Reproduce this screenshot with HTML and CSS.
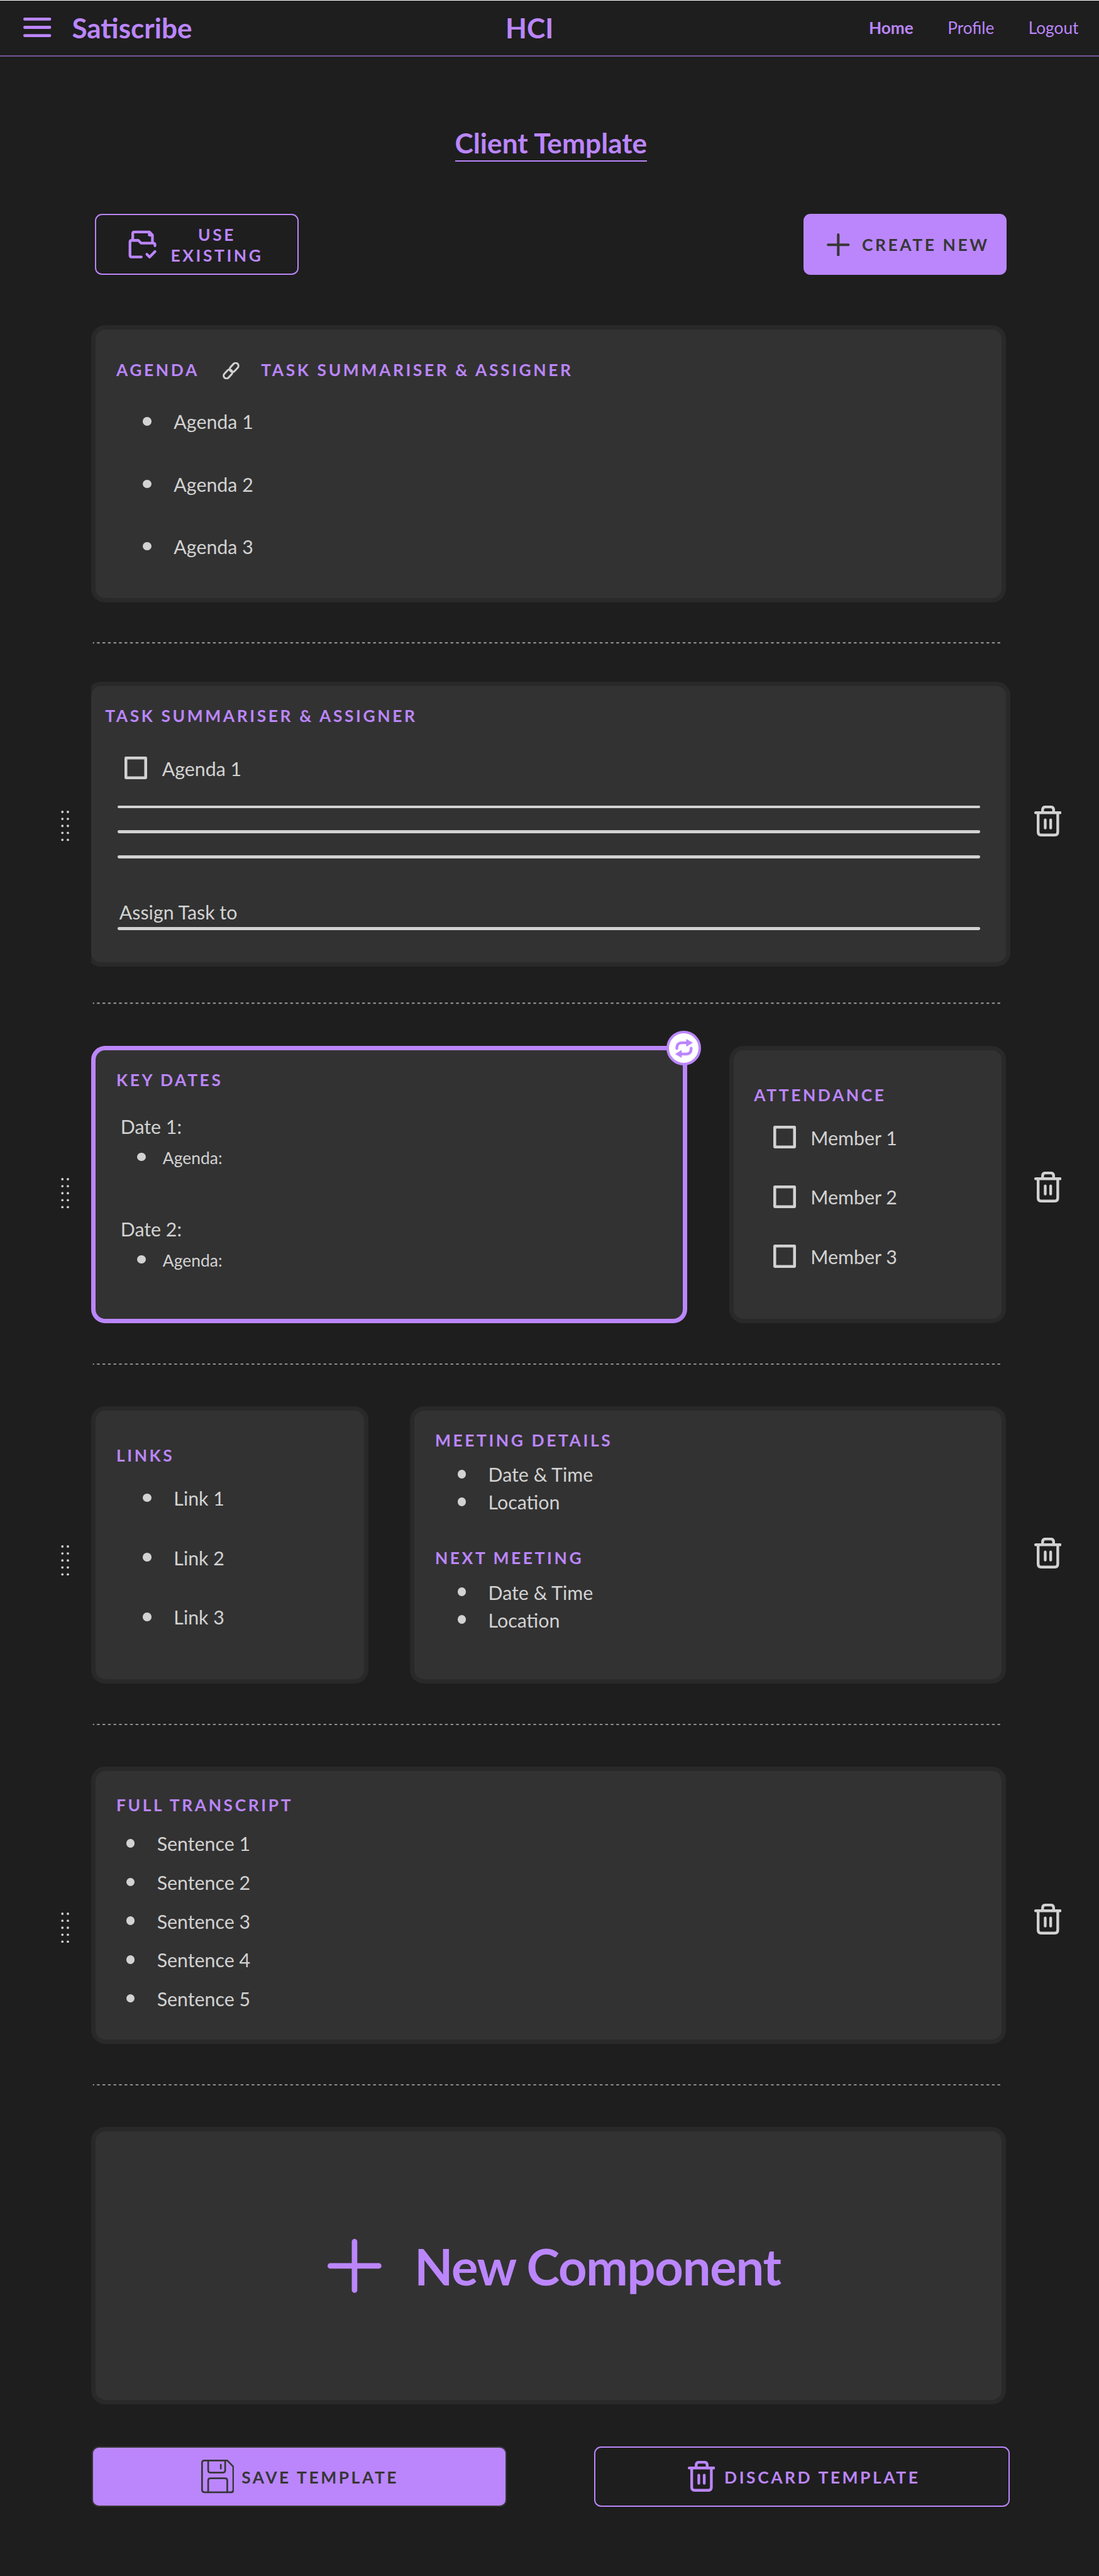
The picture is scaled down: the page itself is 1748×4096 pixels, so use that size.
FILE: index.html
```html
<!DOCTYPE html>
<html lang="en">
<head>
<meta charset="utf-8">
<title>Satiscribe - Client Template</title>
<link rel="stylesheet" href="styles.css">
</head>
<body>
<svg class="defs" width="0" height="0" aria-hidden="true">
  <symbol id="trash" viewBox="0 0 55 62">
    <g fill="none" stroke="currentColor" stroke-width="5.5" stroke-linecap="round" stroke-linejoin="round">
      <path d="M2.7 14.1H52.2M16.7 14V8.5Q16.7 2.7 22.5 2.7H33Q38.8 2.7 38.8 8.5V14M7.8 14V53Q7.8 58.9 13.6 58.9H41.3Q47.1 58.9 47.1 53V14M22 28.5V44.8M32.9 28.5V44.8"/>
    </g>
  </symbol>
  <symbol id="grip" viewBox="0 0 17 61">
    <path fill="none" stroke="currentColor" stroke-width="4.8" stroke-linecap="round" d="M2.8 2.5h.01M2.8 16.5h.01M2.8 30.5h.01M2.8 44.5h.01M2.8 58.5h.01M13.8 2.5h.01M13.8 16.5h.01M13.8 30.5h.01M13.8 44.5h.01M13.8 58.5h.01"/>
  </symbol>
  <symbol id="dashes" viewBox="0 0 1823 3">
    <path d="M0 1.5H1823" stroke="currentColor" stroke-width="3" stroke-dasharray="5.55 5.55" stroke-dashoffset="2.8"/>
  </symbol>
</svg>

<header class="topbar">
  <div class="brand">
    <svg class="menu" viewBox="0 0 56 39"><path d="M3 3H53M3 19.5H53M3 36H53" stroke="currentColor" stroke-width="6" stroke-linecap="round"/></svg>
    <span class="logo">Satiscribe</span>
  </div>
  <span class="logo">HCI</span>
  <nav class="nav">
    <a class="current">Home</a>
    <a>Profile</a>
    <a>Logout</a>
  </nav>
</header>

<main>
  <h1 class="page-title"><span>Client Template</span></h1>

  <div class="actions">
    <button class="btn outline use">
      <svg class="folder" viewBox="0 0 80 80"><g fill="none" stroke="currentColor" stroke-width="5.4" stroke-linecap="round" stroke-linejoin="round"><path d="M20.3 30V18Q20.3 15 23.3 15H54L59.7 21V35"/><path d="M53.5 16V21.3H59"/><path d="M37.5 65H18Q14.8 65 14.8 61.8V35Q14.8 31.8 18 31.8H31.5L37 37.2H61.5Q64.8 37.2 64.8 40.5V42.5"/><path d="M48.5 59.5L54 65L64.8 54"/></g></svg>
      <span>USE<br>EXISTING</span>
    </button>
    <button class="btn filled create">
      <svg class="plus" viewBox="0 0 46 46"><path d="M2.7 23H43.3M23 2.7V43.3" stroke="currentColor" stroke-width="5.2" stroke-linecap="round"/></svg>
      <span>CREATE NEW</span>
    </button>
  </div>

  <div class="board">
    <div class="grips">
      <svg class="grip"><use href="#grip"/></svg>
      <svg class="grip"><use href="#grip"/></svg>
      <svg class="grip"><use href="#grip"/></svg>
      <svg class="grip"><use href="#grip"/></svg>
    </div>

    <div class="stack">
      <section class="card agenda">
        <div class="heading-row">
          <h2>AGENDA</h2>
          <svg class="link" viewBox="0 0 34 34"><g transform="rotate(-47 17 17)" fill="none" stroke="currentColor" stroke-width="3.8"><rect x="-2.1" y="11.3" width="20.4" height="11.4" rx="5.7"/><rect x="15.7" y="11.3" width="20.4" height="11.4" rx="5.7"/></g></svg>
          <h2>TASK SUMMARISER &amp; ASSIGNER</h2>
        </div>
        <ul class="bullets">
          <li>Agenda 1</li>
          <li>Agenda 2</li>
          <li>Agenda 3</li>
        </ul>
      </section>

      <svg class="divider"><use href="#dashes"/></svg>

      <div class="clip">
        <section class="card summary">
          <h2>TASK SUMMARISER &amp; ASSIGNER</h2>
          <label class="check"><i></i>Agenda 1</label>
          <div class="rules"><hr><hr><hr></div>
          <p class="assign">Assign Task to</p>
          <hr>
        </section>
      </div>

      <svg class="divider"><use href="#dashes"/></svg>

      <div class="pair">
        <section class="card dates selected">
          <h2>KEY DATES</h2>
          <p>Date 1:</p>
          <ul class="bullets small"><li>Agenda:</li></ul>
          <p>Date 2:</p>
          <ul class="bullets small"><li>Agenda:</li></ul>
          <span class="swap">
            <svg viewBox="0 0 35 38"><path d="M3.2 19C3 11.5 6.5 7.7 13 7.7H23M31.8 18.5C32 26.5 28.5 30.2 22 30.2H12" fill="none" stroke="currentColor" stroke-width="5.6" stroke-linecap="round"/><path d="M22.5 .8L34.5 7.7L22.5 14.8ZM12.5 22.8L.5 30.2L12.5 37.2Z" fill="currentColor" stroke="currentColor" stroke-width="1" stroke-linejoin="round"/></svg>
          </span>
        </section>
        <section class="card short attendance">
          <h2>ATTENDANCE</h2>
          <div class="checks">
            <label class="check"><i></i>Member 1</label>
            <label class="check"><i></i>Member 2</label>
            <label class="check"><i></i>Member 3</label>
          </div>
        </section>
      </div>

      <svg class="divider"><use href="#dashes"/></svg>

      <div class="pair">
        <section class="card short links">
          <h2>LINKS</h2>
          <ul class="bullets">
            <li>Link 1</li>
            <li>Link 2</li>
            <li>Link 3</li>
          </ul>
        </section>
        <section class="card meeting">
          <h2>MEETING DETAILS</h2>
          <ul class="bullets">
            <li>Date &amp; Time</li>
            <li>Location</li>
          </ul>
          <h2>NEXT MEETING</h2>
          <ul class="bullets">
            <li>Date &amp; Time</li>
            <li>Location</li>
          </ul>
        </section>
      </div>

      <svg class="divider"><use href="#dashes"/></svg>

      <section class="card transcript">
        <h2>FULL TRANSCRIPT</h2>
        <ul class="bullets">
          <li>Sentence 1</li>
          <li>Sentence 2</li>
          <li>Sentence 3</li>
          <li>Sentence 4</li>
          <li>Sentence 5</li>
        </ul>
      </section>

      <svg class="divider"><use href="#dashes"/></svg>

      <section class="card new">
        <svg class="big-plus" viewBox="0 0 108 108"><path d="M5.5 54H102.5M54 5.5V102.5" stroke="currentColor" stroke-width="11" stroke-linecap="round"/></svg>
        <span>New Component</span>
      </section>
    </div>

    <div class="bins">
      <svg class="bin"><use href="#trash"/></svg>
      <svg class="bin"><use href="#trash"/></svg>
      <svg class="bin"><use href="#trash"/></svg>
      <svg class="bin"><use href="#trash"/></svg>
    </div>
  </div>

  <div class="footer">
    <button class="btn filled save">
      <svg class="disk" viewBox="0 0 66 67"><g fill="none" stroke="currentColor" stroke-width="3.4" stroke-linecap="round" stroke-linejoin="round"><path d="M6.5 1.7H52.3L64.3 14V60.5Q64.3 65.3 59.5 65.3H6.5Q1.7 65.3 1.7 60.5V6.5Q1.7 1.7 6.5 1.7Z"/><path d="M14 2V21.5Q14 26 18.5 26H43.5Q48 26 48 21.5V2M39.3 10.3V17.8M14 65V42Q14 37.3 18.5 37.3H47.5Q52.2 37.3 52.2 42V65"/></g></svg>
      <span>SAVE TEMPLATE</span>
    </button>
    <button class="btn outline discard">
      <svg class="bin"><use href="#trash"/></svg>
      <span>DISCARD TEMPLATE</span>
    </button>
  </div>
</main>
</body>
</html>
```

FILE: styles.css
```css
:root {
  --bg: #1e1e1e;
  --card: #323232;
  --card-edge: #292929;
  --accent: #bb86fc;
  --ink: #d2d2d2;
  --dark: #373737;
}

/* 1rem is 1/220 of the window width */
html { font-size: calc(100vw / 220); }

* { box-sizing: border-box; }

body {
  margin: 0;
  background: var(--bg);
  color: var(--ink);
  font-family: Lato, "Liberation Sans", sans-serif;
  font-size: 3.82rem;
  line-height: 4.6rem;
}

h1, h2, p, ul { margin: 0; padding: 0; font-weight: 400; }
svg { display: block; flex: none; }
.defs { position: absolute; }

/* Header */
.topbar {
  display: grid;
  grid-template-columns: 101.2rem auto 1fr;
  align-items: center;
  height: 11.3rem;
  border-top: .2rem solid #fff;
  border-bottom: .26rem solid #75559a;
  color: var(--accent);
}
.brand { display: flex; align-items: center; gap: 4.1rem; padding-left: 4.7rem; }
.menu { width: 5.6rem; height: 3.9rem; margin-bottom: .3rem; }
.logo { font-size: 5.55rem; line-height: 6.6rem; font-weight: 700; }
.nav {
  display: flex;
  justify-content: flex-end;
  gap: 6.85rem;
  padding: .1rem 4.1rem 0 0;
  font-size: 3.3rem;
  line-height: 4rem;
}
.current { font-weight: 700; }

/* Title and top actions */
.page-title {
  display: flex;
  justify-content: center;
  margin: 14.05rem 0 0 .6rem;
  color: var(--accent);
}
.page-title span {
  font-size: 5.57rem;
  line-height: 6.6rem;
  font-weight: 700;
  padding-bottom: .15rem;
  border-bottom: .3rem solid var(--accent);
}

.btn {
  display: flex;
  align-items: center;
  height: 12.2rem;
  padding: 0;
  border-radius: 1.4rem;
  font: 700 3.33rem/4.2rem Lato, "Liberation Sans", sans-serif;
  letter-spacing: .134em;
}
.btn span { padding-top: .3rem; }
.outline { background: none; border: .27rem solid var(--accent); color: var(--accent); }
.filled { background: var(--accent); border: 0; color: var(--dark); }

.actions {
  display: flex;
  justify-content: space-between;
  margin: 10.5rem 18.45rem 10rem 19rem;
}
.use { width: 40.8rem; padding-left: 5.33rem; gap: 1.6rem; }
.folder { width: 8rem; height: 8rem; }
.create { width: 40.75rem; padding-left: 4.75rem; gap: 2.4rem; }
.plus { width: 4.6rem; height: 4.6rem; }

/* Board: drag handles, cards, delete buttons */
.board { display: grid; grid-template-columns: 18.3rem 183.1rem 1fr; }
.grips { display: flex; flex-direction: column; gap: 67.4rem; padding: 97.2rem 0 0 12.25rem; }
.grip { width: 1.7rem; height: 6.1rem; }
.bins { display: flex; flex-direction: column; gap: 67.05rem; padding: 96.2rem 0 0 5.6rem; }
.bin { width: 5.5rem; height: 6.2rem; }

.stack { display: flex; flex-direction: column; }
.divider { width: 182.3rem; height: .3rem; margin: 8rem 0 8.33rem; color: #8f8f8f; }
.pair { display: flex; justify-content: space-between; }

.card {
  position: relative;
  height: 55.5rem;
  padding: 4.03rem 4rem 0 4.1rem;
  background: var(--card);
  border: .89rem solid var(--card-edge);
  border-radius: 2.8rem;
}
.selected { border-color: var(--accent); }

h2 {
  color: var(--accent);
  font-size: 3.33rem;
  line-height: 4rem;
  font-weight: 700;
  letter-spacing: .135em;
}

.bullets { display: flex; flex-direction: column; list-style: none; }
.bullets li { display: flex; align-items: center; gap: 4.45rem; }
.bullets li::before {
  content: "";
  width: 1.7rem;
  height: 1.7rem;
  margin-bottom: .15rem;
  border-radius: 50%;
  background: var(--ink);
}
.small { font-size: 3.33rem; line-height: 4rem; }
.small li::before { margin-bottom: .55rem; }

.check { display: flex; align-items: center; height: 4.6rem; }
.check i {
  width: 4.5rem;
  height: 4.6rem;
  margin-bottom: .2rem;
  border-radius: .3rem;
  box-shadow: inset 0 0 0 .57rem var(--ink);
}

hr { height: .6rem; margin: 0; border: 0; border-radius: .3rem; background: var(--ink); }

.agenda { padding-top: 6.23rem; }
.heading-row { display: flex; align-items: center; }
.link { width: 3.4rem; height: 3.4rem; margin: 0 4.3rem 0 4.7rem; }
.agenda .bullets { margin: 5.96rem 0 0 5.35rem; gap: 7.88rem; }

/* The summary card bleeds past the column's left edge and is cut there */
.clip { width: 183.9rem; margin: -.8rem 0; overflow: hidden; }
.summary { height: 57.1rem; margin-left: -.89rem; padding: 4.12rem 5.15rem 0 5.25rem; }
.summary h2 { margin-left: -2.5rem; }
.summary .check { gap: 3rem; margin: 6.1rem 0 5.09rem 1.4rem; }
.rules { display: flex; flex-direction: column; gap: 4.4rem; }
.assign { margin: 8.5rem 0 .69rem .35rem; }

.dates { width: 119.25rem; }
.dates p { margin: 4.97rem 0 2rem .85rem; }
.dates .small { margin-left: 4.2rem; }
.dates .small + p { margin-top: 9.93rem; }
.dates .small li { gap: 3.4rem; }
.swap {
  position: absolute;
  top: -3.9rem;
  right: -3.7rem;
  display: grid;
  place-items: center;
  width: 6.95rem;
  height: 6.95rem;
  border: .55rem solid var(--accent);
  border-radius: 50%;
  background: #fff;
  color: var(--accent);
}
.swap svg { width: 3.5rem; height: 3.8rem; }

.short { width: 55.45rem; padding-top: 7.06rem; }
.checks { display: flex; flex-direction: column; gap: 7.33rem; margin: 4.13rem 0 0 3.85rem; }
.checks .check { gap: 3rem; }
.links .bullets { margin: 4.13rem 0 0 5.35rem; gap: 7.33rem; }

.meeting { width: 119.3rem; }
.meeting .bullets { margin: 2.45rem 0 6.98rem 4.5rem; gap: .94rem; }

.transcript { padding-top: 4.9rem; }
.transcript .bullets { margin: 3.3rem 0 0 2rem; gap: 3.17rem; }

.new {
  display: flex;
  align-items: center;
  gap: 6.6rem;
  padding: 0 0 0 46.4rem;
  color: var(--accent);
  font-size: 10rem;
  line-height: 12rem;
  font-weight: 700;
  letter-spacing: -.016em;
}
.new span { padding-top: .3rem; }
.big-plus { width: 10.8rem; height: 10.8rem; }

.footer { display: flex; gap: 17.6rem; margin: 8.35rem 0 0 18.4rem; }
.save { width: 83rem; padding-left: 21.6rem; gap: 1.5rem; border: .26rem solid var(--dark); }
.disk { width: 6.6rem; height: 6.7rem; }
.discard { width: 83.1rem; padding-left: 18.4rem; gap: 1.85rem; }
```
